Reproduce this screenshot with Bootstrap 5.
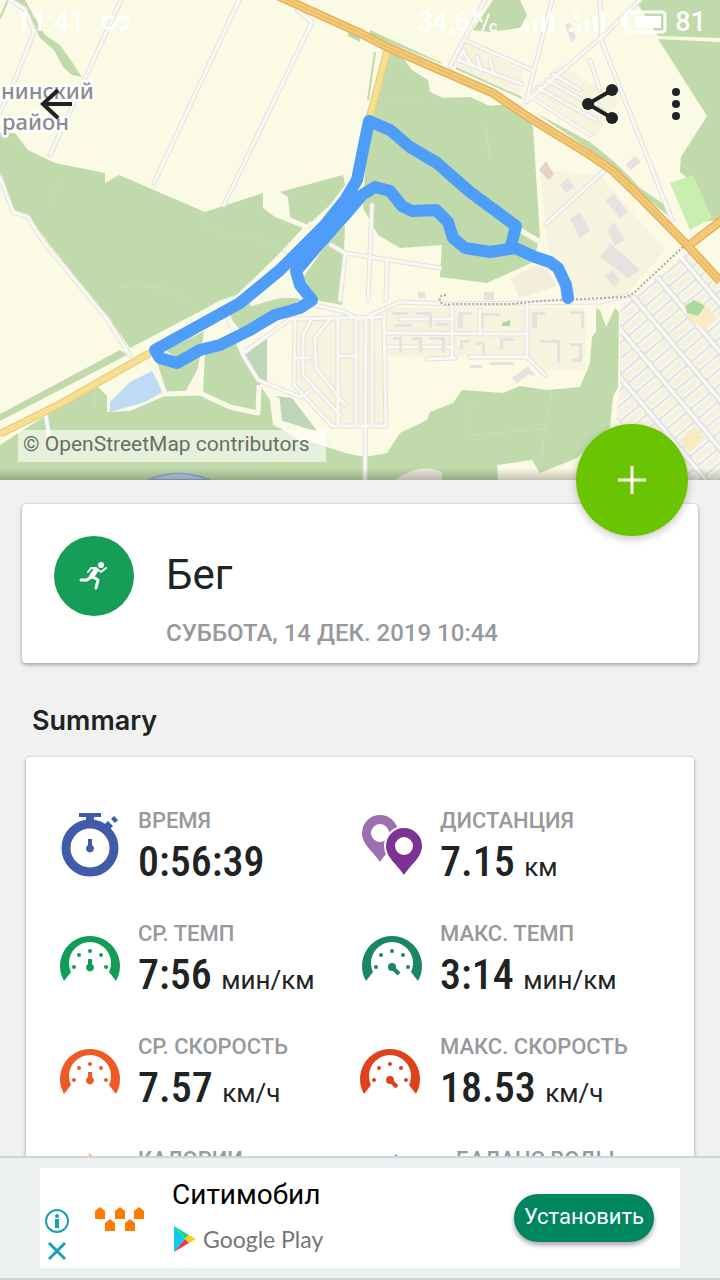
<!DOCTYPE html>
<html lang="ru">
<head>
<meta charset="utf-8">
<meta name="viewport" content="width=device-width, initial-scale=1">
<title>Бег</title>
<link href="https://cdn.jsdelivr.net/npm/bootstrap@5.3.0/dist/css/bootstrap.min.css" rel="stylesheet">
<style>
  body { font-family: Roboto, "Noto Sans", sans-serif; background: #f1f1f1; color: #202323; }
  .screen { scrollbar-width: none; }
  .screen::-webkit-scrollbar { display: none; }
  .map-art { aspect-ratio: 3 / 2; }
  .map-shade { height: 12px; background: linear-gradient(transparent, rgba(0,0,0,.22)); }
  .status { height: 44px; padding: 0 14px 0 16px; color: #fff; font-size: 27px; line-height: 44px; font-weight: 500; }
  .speed-unit { width: 28px; height: 24px; margin-left: 4px; font-size: 16px; }
  .toolbar { padding: 20px 20px 0 32px; height: 100px; }
  .tool { width: 48px; height: 80px; padding: 0; border: 0; background: none; color: #202323; }
  .tool-gap { gap: 28px; }
  .credit { left: 18px; bottom: 18px; width: 308px; height: 32px; padding-left: 5px; font-size: 21px; line-height: 29px; color: #667060; background: rgba(255,255,255,.6); }
  .fab { right: 32px; top: 0; width: 112px; height: 112px; background: #6bc402; box-shadow: 0 3px 8px rgba(0,0,0,.22); border: 0; z-index: 2; }
  .panel { border: 0; border-radius: 4px; box-shadow: 0 2px 4px rgba(0,0,0,.3), 0 0 2px rgba(0,0,0,.15); }
  .details { padding-top: 24px; }
  .head-panel { margin: 0 22px; height: 159px; padding: 32px; gap: 32px; }
  .sport { width: 80px; height: 80px; background: #169d58; }
  .sport-name { font-size: 42px; line-height: 48px; padding-top: 15px; margin: 0; font-weight: 400; }
  .sport-date { font-size: 24px; line-height: 32px; margin-top: 18px; color: #97999d; font-weight: 500; }
  .section-title { margin: 40px 32px 0; font-family: Inter, Roboto, sans-serif; font-size: 27px; line-height: 36px; font-weight: 600; }
  .stats { margin: 18px 26px 0; padding: 49px 30px 0 34px; }
  .stat { height: 113px; gap: 18px; }
  .stat svg { width: 60px; height: 72px; overflow: visible; }
  .stat-name { font-size: 22px; line-height: 30px; font-weight: 500; color: #97999d; white-space: nowrap; }
  .stat-value { font-size: 26px; line-height: 52px; white-space: nowrap; }
  .stat-value b { font-family: "Roboto Condensed", "Liberation Sans Narrow", Roboto, sans-serif; font-size: 42px; font-weight: 500; margin-right: 3px; }
  .wide-icon { padding-left: 16px; }
  .ad-bar { background: #edf1f2; border-top: 2px solid #d0d4d6; border-bottom: 2px solid #d0d4d6; padding: 10px 40px; }
  .ad-box { background: #fff; height: 100px; padding: 0 26px 0 4px; }
  .ad-marks { width: 26px; padding-top: 40px; gap: 4px; }
  .ad-marks a { height: 26px; }
  .ad-logo { width: 50px; margin-left: 25px; }
  .ad-copy { margin-left: 27px; }
  .ad-title { font-size: 28px; line-height: 36px; color: #000; margin-top: 9px; }
  .play { font-size: 23px; line-height: 30px; color: #757575; margin-top: 11px; gap: 6px; font-family: Lato, sans-serif; }
  .install { background: #00875f; color: #fff; font-size: 22px; line-height: 44px; height: 48px; width: 140px; padding: 0 0 2px; border: 0; box-shadow: 0 3px 5px rgba(0,0,0,.35); }
</style>
</head>
<body>
<div class="vh-100 d-flex flex-column overflow-hidden">
<main class="screen flex-grow-1 overflow-auto">

  <section class="position-relative">
    <svg class="map-art d-block w-100" viewBox="0 0 720 480" preserveAspectRatio="xMidYMid slice" role="img" aria-label="Карта маршрута">
      <defs>
        <pattern id="plots" width="31" height="12" patternUnits="userSpaceOnUse" patternTransform="translate(634 300) rotate(-40)">
          <rect width="31" height="12" fill="#e4e3df"/><path d="M0 0H3V12H0Z" fill="#faf9f5"/><rect x="5" y="1" width="24" height="10" rx="2" fill="#f8f7f0"/><rect x="6" y="3" width="22" height="6" fill="#f2f2df"/>
        </pattern>
        <g id="lanes" fill="none" stroke-linejoin="round" stroke-linecap="round">
          <path d="M10 0L25 9L34 32L10 92L0 112M121 0L50 155M239 0L154 183M297 10L312 22L224 205"/>
          <path d="M0 177L13 212L28 217L42 240L108 320L130 356M45 410L49 436"/>
          <path d="M485 0L450 66M552 0L526 102L604 35L640 0M600 0L602 42L672 220M464 40L532 70M464 50L458 60L522 84M465 54L472 66M477 57L481 70M490 61L494 75M530 96L590 135M538 88L596 120M547 80L604 112M553 74L580 90"/>
          <path d="M546 224L605 170M590 60L600 90"/>
          <path d="M331 245L345 253L440 268M372 205L368 300M345 255L340 300M387 262L386 300"/>
          <path d="M228 318L243 355L258 380L300 397L312 390M245 352L290 319L385 317"/>
          <path d="M315 305L345 312L360 320L400 302L450 304L600 302L630 295"/>
          <path d="M295 319L294 385L332 426H386L384 320M311 320L303 335L303 375L340 415M330 319L315 338L316 368L345 405M338 318L338 426M356 318L356 426M372 318L372 426M296 358L310 358M338 356L356 356"/>
          <path d="M366 318L365 480M385 333L525 334M452 305L452 358M527 305L527 357M400 319L450 319M427 359L455 358M470 357L527 357L545 375M388 347L450 347M480 310L480 334"/>
        </g>
      </defs>
      <rect width="720" height="480" fill="#fbfae5"/>
      <g fill="#f6f3df">
        <path d="M540 170L600 175L665 250L625 296L575 297L548 250Z"/>
        <path d="M385 308H585V370H545L525 358L388 356Z"/><path d="M294 318H386V426H332L294 385Z"/>
        <path d="M464 42L522 70L520 95L456 66ZM530 90L560 65L620 100L595 138Z"/>
        <path fill="#f2eedb" d="M510 278L545 262L556 286L520 298Z"/>
      </g>
      <g fill="#c1daab">
        <path d="M13 0H25L35 18L45 35L60 45L72 62L82 77L72 75L63 67L54 50L40 38L32 20Z"/>
        <path d="M0 133H15L28 150L55 163L105 173V183L119 175L205 212L263 193V208L275 217L303 228L275 258L235 297L218 302L130 348L110 320L50 245L28 216L14 214L0 177Z"/>
        <path d="M280 192L343 175L345 185L330 205L308 225L290 217L288 197Z"/>
        <path d="M389 52L403 58L412 70L428 80L430 92L443 98L470 97L490 106L508 104L525 115L533 127L540 237L533 262L487 283L440 277L442 245L400 248L378 235L363 208L368 125Z"/>
        <path d="M298 285L328 242L345 225L342 305L316 300ZM228 316L250 303L295 296L303 302L296 310L243 333Z"/>
        <path d="M165 350L207 330L203 345L175 357ZM157 362L203 353L200 370L188 391L166 392ZM205 352L235 338L262 390L258 413L232 408L203 393Z"/>
        <path d="M0 445L95 384L107 396V412L130 411L165 396L200 394L230 409L258 415L262 388L270 400L273 425L300 438L345 453L365 457L387 453L400 433L427 420L430 412L453 403L462 390L503 393L520 386L547 390L580 387L590 363L592 337L596 332V308L600 310L606 327L615 308L619 312L618 387L613 397L610 427L577 458L540 473L532 460L497 465L498 480H0Z"/>
        <path d="M0 414L120 350L127 355L0 421ZM493 0H520L527 15L520 28L490 32L473 30Z"/>
        <path d="M635 0H720V38L658 36ZM658 39L720 42V220L700 222L690 180L680 172L681 157L707 116Z"/>
        <path d="M536 113L590 142L612 160L625 172L640 188L665 205L676 222L640 193L590 150ZM348 30L360 34V42L348 36ZM370 30L440 62L442 64L370 35Z"/>
      </g>
      <g fill="#bfd5b9"><path d="M244 352L267 336L267 382L258 385ZM277 396L292 398L318 432L280 420Z"/></g>
      <path d="M670 183L693 175L712 218L690 230Z" fill="#c8efb0"/>
      <path d="M110 402L130 382L152 371L163 392L145 402L110 412Z" fill="#bedaf4"/>
      <path d="M375 52L368 100M456 68L522 98M0 18L8 0" fill="none" stroke="#c1daab" stroke-width="2"/>
      <path d="M628 300L690 250L720 280V480H660L615 430L620 385V305Z" fill="url(#plots)"/>
      <g fill="#f8ebc4"><path d="M683 305L700 300L716 318L705 330L690 320ZM680 440L695 427L704 437L690 452Z"/></g>
      <path d="M685 306L694 300L705 306L698 316L687 313ZM502 323L510 320V326H502Z" fill="#acd9a3"/>
      <use href="#lanes" stroke="#e3e2df" stroke-width="5"/>
      <use href="#lanes" stroke="#f9f8f2" stroke-width="3"/>
      <g fill="none" stroke="#faf8e6" stroke-width="5" stroke-linejoin="round">
        <path d="M150 347L220 303L238 297L275 262L312 223M155 365L165 394L200 393L230 407L258 413L259 385M207 330L200 370L188 392M228 316L243 352M277 398L280 425L300 438L330 443M250 304L280 295L300 296M520 230L540 242"/>
      </g>
      <g fill="#e6e2e0">
        <path d="M600 257L610 243L640 270L628 278ZM605 276L612 270L620 280L614 287ZM607 230L614 222L625 240L615 246ZM625 165L635 156L641 162L631 170ZM605 200L614 195L628 212L620 218ZM570 218L580 212L590 230L580 238ZM565 25L570 22L576 38L571 42ZM512 378L528 366L536 376L528 375L517 383ZM418 292H425V298H418ZM484 292H494V300H484ZM560 185L568 178L574 187L566 193Z"/>
        <path d="M460 312H472V315H463V328H458V312ZM483 313H500V316H484V328H481V313ZM534 312H545V315H537V328H532V312ZM570 311H584V328H581V314H570ZM540 340H560V363H557V343H540ZM570 343H582V362H572V359H579V346H570ZM393 337H402V353H399V340H393ZM412 337H422V353H419V340H412ZM430 337H445V353H442V340H430ZM460 340H470V343H463V350H460ZM475 342H485V355H482V345H475ZM500 338H515V341H503V350H500ZM470 365H482V368H470ZM490 362H514V365H490ZM392 312H408V315H392ZM395 324H412V327H395ZM416 312H432V328H429V315H416ZM436 323H448V326H436Z"/>
      </g>
      <path d="M539 170L546 161L554 174L549 180Z" fill="#ead0cb"/>
      <path d="M60 180L50 205M205 222Q230 245 250 235L300 260M465 418L475 400M468 430L472 435L545 429L552 392M545 429L540 470M385 100L420 98M490 160L485 120M94 384L95 408M120 287Q170 282 190 302" fill="none" stroke="#cbdfb6" stroke-width="1"/>
      <g fill="none">
        <path d="M0 434L60 404L150 353M388 48L369 120" stroke="#e9d08a" stroke-width="8"/>
        <path d="M0 434L60 404L150 353M388 48L369 120" stroke="#f7e08c" stroke-width="5"/>
        <path d="M278 -4L360 33L387 47L440 70L493 93L525 115L590 155L612 170L640 197L688 246L720 281M688 246L722 220" stroke="#e6b15f" stroke-width="9"/>
        <path d="M278 -4L360 33L387 47L440 70L493 93L525 115L590 155L612 170L640 197L688 246L720 281M688 246L722 220" stroke="#f4c973" stroke-width="6"/>
        <path d="M278 -4L360 33L387 47L440 70L493 93L525 115L590 155L612 170L640 197L688 246L720 281" stroke="#e7b565" stroke-width="1"/>
        <path d="M446 295Q438 295 440 301Q442 306 452 304L512 304L540 301L624 297Q632 296 640 287L683 247" stroke="#aaa9a0" stroke-width="2" stroke-dasharray="2 2"/>
      </g>
      <path d="M148 480Q178 467 210 480Z" fill="#c4cfe0" stroke="#8fb2dd" stroke-width="2"/>
      <path d="M395 480Q420 462 442 472V480Z" fill="#efeadd"/>
      <g font-family="Noto Sans, sans-serif" font-size="22" font-weight="500" fill="#8b8b8f" stroke="#fff" stroke-width="5" paint-order="stroke" stroke-linejoin="round">
        <text x="1" y="99">нинский</text><text x="2" y="130">район</text>
      </g>
      <path d="M568 298L566 285L558 268L550 262L535 257L515 248L490 252L465 248L453 238L448 222L436 210L412 211L402 206L390 191L375 187L362 195L345 215L320 243L296 271L300 285L312 300L300 308L275 315L250 330L220 345L200 350L177 363L160 358L155 350L240 303L280 270L325 225L345 200L357 180L363 150L369 121L390 130L410 147L437 163L470 192L516 226L511 246" fill="none" stroke="#4e9df9" stroke-width="12" stroke-linejoin="round" stroke-linecap="round"/>
    </svg>
    <div class="map-shade position-absolute bottom-0 start-0 w-100"></div>

    <header class="position-absolute top-0 start-0 w-100">
      <div class="status d-flex justify-content-between">
        <div class="d-flex align-items-center">
          <span>11:41</span>
          <svg class="ms-3" width="34" height="20" fill="none" stroke="#fff" stroke-width="3"><path d="M12 6A6 6 0 1 0 12 15L18 6A6 6 0 1 1 18 15"/></svg>
        </div>
        <div class="d-flex align-items-center">
          <span>34,6</span>
          <svg class="speed-unit" fill="#fff"><text x="0" y="12">К</text><path d="M9 22L16 4" stroke="#fff" stroke-width="2"/><text x="16" y="22">с</text></svg>
          <svg class="ms-3" width="88" height="24" fill="#fff"><path d="M0 18h4v4H0zM8 14h4v8H8zM16 10h4v12h-4zM24 6h4v16h-4zM32 2h4v20h-4zM52 18h4v4h-4zM60 14h4v8h-4zM68 10h4v12h-4zM76 6h4v16h-4zM84 2h4v20h-4z"/><path d="M62 1h-5v7h5V5h-2" fill="none" stroke="#fff" stroke-width="2"/></svg>
          <svg class="ms-3" width="46" height="24" fill="#fff"><rect x="5" y="2" width="39" height="20" rx="3" fill="none" stroke="#fff" stroke-width="3"/><path d="M0 8h4v8H0zM14 6h26v12H14z"/></svg>
          <span class="ms-2">81</span>
        </div>
      </div>
      <div class="toolbar d-flex justify-content-between align-items-center">
        <button class="tool" aria-label="Назад"><svg width="48" height="48" fill="none" stroke="currentColor" stroke-width="4"><path d="M40 24H11M26 10L11 24L26 38"/></svg></button>
        <div class="tool-gap d-flex">
          <button class="tool" aria-label="Поделиться"><svg width="48" height="48" fill="currentColor"><path d="M36 10L12 24L36 38" fill="none" stroke="currentColor" stroke-width="4"/><circle cx="12" cy="24" r="6"/><circle cx="36" cy="10" r="6"/><circle cx="36" cy="38" r="6"/></svg></button>
          <button class="tool" aria-label="Меню"><svg width="48" height="48" fill="currentColor"><circle cx="24" cy="12" r="4"/><circle cx="24" cy="24" r="4"/><circle cx="24" cy="36" r="4"/></svg></button>
        </div>
      </div>
    </header>
    <a href="#" class="credit position-absolute text-decoration-none">© OpenStreetMap contributors</a>
  </section>

  <div class="details position-relative">
    <button class="fab position-absolute translate-middle-y rounded-circle p-0" aria-label="Добавить"><svg width="28" height="28" stroke="#fff" stroke-width="3"><path d="M0 14H28M14 0V28"/></svg></button>

    <section class="panel head-panel card flex-row">
      <span class="sport rounded-circle flex-shrink-0 d-flex align-items-center justify-content-center">
        <svg width="30" height="30" fill="none" stroke="#fff" stroke-linecap="round" stroke-linejoin="round"><circle cx="22" cy="4" r="3" fill="#fff" stroke="none"/><path d="M17 9L13 15" stroke-width="5"/><path d="M17 7H12L9 11M18 8L22 11L27 7" stroke-width="2"/><path d="M12 16L8 19H2M14 16L19 19L17 27" stroke-width="3"/></svg>
      </span>
      <div>
        <h1 class="sport-name">Бег</h1>
        <div class="sport-date">СУББОТА, 14 ДЕК. 2019 10:44</div>
      </div>
    </section>

    <h2 class="section-title">Summary</h2>

    <svg width="0" height="0" class="position-absolute" aria-hidden="true">
      <defs>
        <g id="dial"><path d="M4 60A30 30 0 1 1 56 60L49 51A21 21 0 1 0 11 51Z"/><circle cx="14" cy="46" r="2"/><circle cx="19" cy="34" r="2"/><circle cx="30" cy="30" r="2"/><circle cx="41" cy="34" r="2"/><circle cx="46" cy="46" r="2"/></g>
      </defs>
    </svg>

    <section class="panel stats card">
      <div class="row g-0">
        <div class="col-6 stat d-flex">
          <svg class="flex-shrink-0" fill="#3f5ba9"><circle cx="30" cy="42" r="24" fill="none" stroke="#3f5ba9" stroke-width="9"/><path d="M19 7H41V11H34V18H26V11H19ZM44 19L48 15L53 20L49 24ZM51 13L54 10L58 14L55 17ZM28 33H32V39A4 4 0 1 1 28 39Z"/></svg>
          <div><div class="stat-name">ВРЕМЯ</div><div class="stat-value"><b>0:56:39</b></div></div>
        </div>
        <div class="col-6 stat d-flex">
          <svg class="flex-shrink-0"><path fill-rule="evenodd" fill="#9b6fb0" d="M18 9A18 18 0 0 1 36 27C36 39 24 46 18 56C12 46 0 39 0 27A18 18 0 0 1 18 9ZM18 18A9 9 0 1 0 18 36A9 9 0 1 0 18 18Z"/><path fill="#7d3394" stroke="#fff" stroke-width="4" paint-order="stroke" d="M42 22A18 18 0 0 1 60 40C60 52 48 59 42 69C36 59 24 52 24 40A18 18 0 0 1 42 22Z"/><circle cx="42" cy="40" r="9" fill="#fff"/></svg>
          <div><div class="stat-name">ДИСТАНЦИЯ</div><div class="stat-value"><b>7.15</b> км</div></div>
        </div>
        <div class="col-6 stat d-flex">
          <svg class="flex-shrink-0" fill="#119d57"><use href="#dial" y="2"/><path d="M28 40H32V45A4 4 0 1 1 28 45Z"/></svg>
          <div><div class="stat-name">СР. ТЕМП</div><div class="stat-value"><b>7:56</b> мин/км</div></div>
        </div>
        <div class="col-6 stat d-flex">
          <svg class="flex-shrink-0" fill="#1b8761"><use href="#dial" y="2"/><circle cx="30" cy="48" r="4"/><path d="M30 48L37 55" stroke="#1b8761" stroke-width="4"/></svg>
          <div><div class="stat-name">МАКС. ТЕМП</div><div class="stat-value"><b>3:14</b> мин/км</div></div>
        </div>
        <div class="col-6 stat d-flex">
          <svg class="flex-shrink-0" fill="#ed5a24"><use href="#dial" y="2"/><path d="M28 40H32V45A4 4 0 1 1 28 45Z"/></svg>
          <div><div class="stat-name">СР. СКОРОСТЬ</div><div class="stat-value"><b>7.57</b> км/ч</div></div>
        </div>
        <div class="col-6 stat d-flex">
          <svg class="flex-shrink-0" fill="#de421c"><use href="#dial" x="-2" y="2"/><circle cx="28" cy="48" r="4"/><path d="M28 48L35 55" stroke="#de421c" stroke-width="4"/></svg>
          <div><div class="stat-name">МАКС. СКОРОСТЬ</div><div class="stat-value"><b>18.53</b> км/ч</div></div>
        </div>
        <div class="col-6 stat d-flex">
          <svg class="flex-shrink-0"><path d="M28 8Q44 18 45 34Q52 32 51 28Q62 50 48 64H16Q2 46 20 30Q35 20 28 8Z" fill="#f5a32b"/></svg>
          <div><div class="stat-name">КАЛОРИИ</div></div>
        </div>
        <div class="col-6 stat d-flex">
          <svg class="flex-shrink-0"><path d="M34 9Q56 38 54 50A20 20 0 0 1 14 50Q12 38 34 9Z" fill="#7c87dc"/></svg>
          <div class="wide-icon"><div class="stat-name">БАЛАНС ВОДЫ</div></div>
        </div>
      </div>
    </section>
  </div>
</main>

<aside class="ad-bar flex-shrink-0">
  <div class="ad-box d-flex">
    <div class="ad-marks d-flex flex-column">
      <a href="#" aria-label="О рекламе"><svg class="d-block" width="26" height="26" fill="#18a0b5"><circle cx="13" cy="13" r="11" fill="none" stroke="#18a0b5" stroke-width="2"/><circle cx="13" cy="8" r="2"/><path d="M11 11H15V20H11Z"/></svg></a>
      <a href="#" aria-label="Закрыть"><svg class="d-block" width="26" height="26" stroke="#18a0b5" stroke-width="3"><path d="M5 5L21 21M21 5L5 21"/></svg></a>
    </div>
    <svg class="ad-logo flex-shrink-0" height="100" fill="#ff7a00"><path d="M0 43L5 39L10 43V51H0ZM20 43L25 39L30 43V51H20ZM39 43L44 39L49 43V51H39ZM10 55L15 51L20 55V63H10ZM30 55L35 51L40 55V63H30Z"/></svg>
    <div class="ad-copy flex-grow-1">
      <div class="ad-title">Ситимобил</div>
      <div class="play d-flex align-items-center"><svg width="25" height="28"><path d="M2 1V27L13 14Z" fill="#12c9f5"/><path d="M2 1L17 10L13 14Z" fill="#13dc86"/><path d="M17 10L24 14L17 18L13 14Z" fill="#fcc917"/><path d="M2 27L17 18L13 14Z" fill="#e33b50"/></svg><span>Google Play</span></div>
    </div>
    <button class="install rounded-pill align-self-center">Установить</button>
  </div>
</aside>
</div>
<script src="https://cdn.jsdelivr.net/npm/bootstrap@5.3.0/dist/js/bootstrap.bundle.min.js"></script>
</body>
</html>
